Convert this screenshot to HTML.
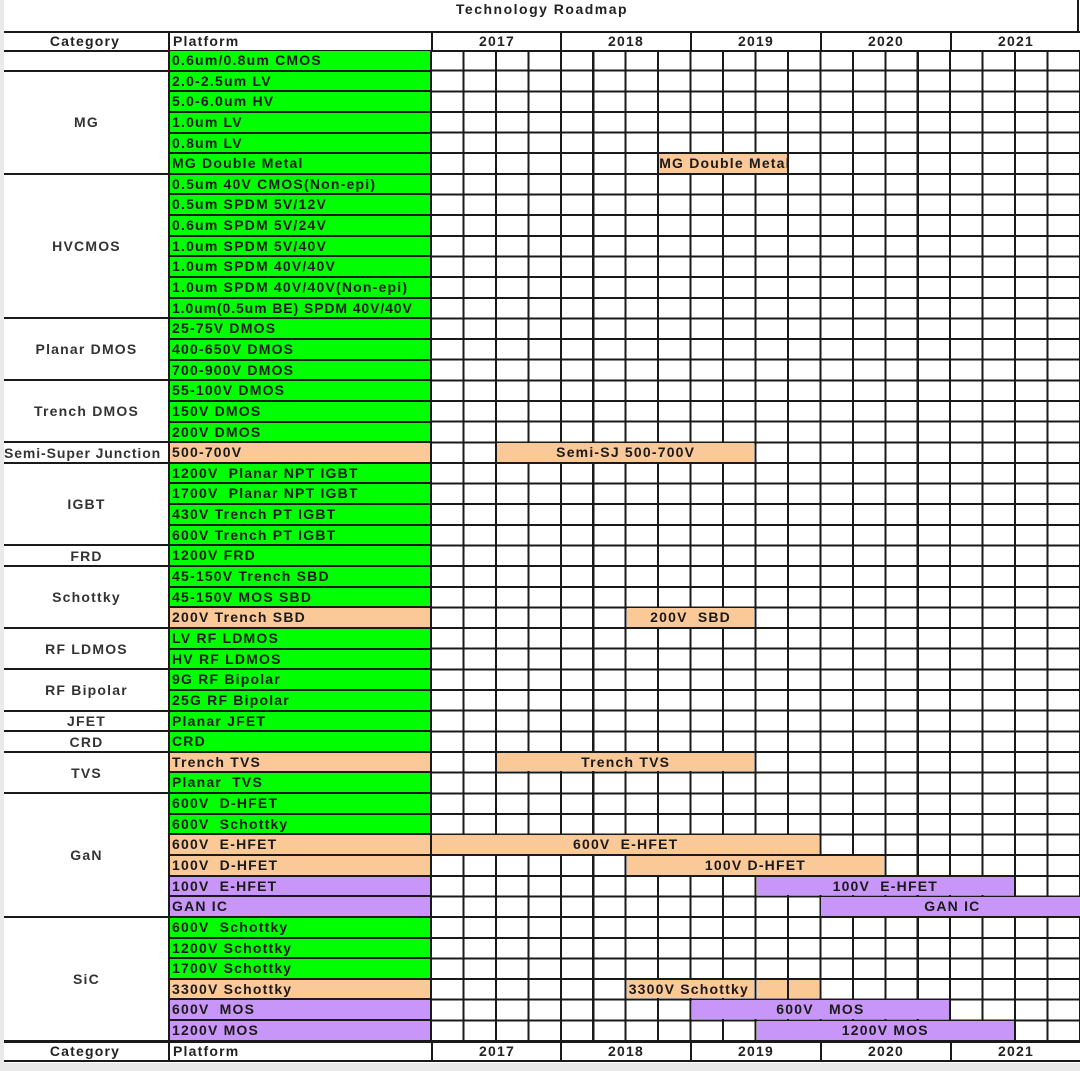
<!DOCTYPE html>
<html><head><meta charset="utf-8"><style>
*{margin:0;padding:0;box-sizing:border-box}
body{width:1080px;height:1071px;background:#e9e9e9;position:relative;overflow:hidden;font-family:"Liberation Sans",Arial,sans-serif;font-weight:bold;font-size:14px;color:#222;letter-spacing:1.2px}
#sheet{position:absolute;left:4px;top:0;width:1076px;height:1063px;background:#fff}
.title{position:absolute;left:0;width:1084px;top:1px;text-align:center;font-weight:bold;font-size:14px;color:#222;letter-spacing:1.5px}
.abs{position:absolute}
.hdr{position:absolute;top:31px;height:21px;border-top:2px solid #1a1a1a;border-bottom:2px solid #1a1a1a;line-height:17px}
.hc{position:absolute;top:0;height:17px;text-align:center;border-left:2px solid #1a1a1a}
#cat{position:absolute;left:4px;top:51px;width:165px}
#cat div{border-bottom:2px solid #1a1a1a;display:flex;align-items:center;justify-content:center;color:#333;white-space:nowrap;overflow:hidden}
#plat{position:absolute;left:168px;top:51px;width:264px;border-left:2px solid #1a1a1a;border-right:2px solid #1a1a1a}
#plat div{height:20.646px;background:#00ff00;border-bottom:2px solid #1a1a1a;padding-left:2px;line-height:19px;white-space:pre;overflow:hidden;color:#1a1a1a}
#plat .o{background:#fbc898}
#plat .u{background:#c896f8}
#tl{position:absolute;left:430px;top:51px;width:652px;height:991px;
background-image:repeating-linear-gradient(90deg,#1a1a1a 0 2px,transparent 2px 32.45px),repeating-linear-gradient(180deg,transparent 0 18.646px,#1a1a1a 18.646px 20.646px)}
.r{height:20.646px;position:relative}
.b{position:absolute;top:0;height:18.646px;line-height:18px;text-align:center;white-space:pre;color:#1a1a1a;overflow:hidden}
.o{background:#fbc898}.u{background:#c896f8}
</style></head><body>
<div id="sheet"></div>
<div class="title">Technology Roadmap</div>
<div class="abs" style="left:1077px;top:0;width:2px;height:31px;background:#1a1a1a"></div>

<div class="hdr" style="left:4px;width:1076px">
 <div class="hc" style="left:-2px;width:166px;border-left:none">Category</div>
 <div class="hc" style="left:164px;width:263px;text-align:left;padding-left:3px">Platform</div>
 <div class="hc" style="left:427px;width:130px">2017</div>
 <div class="hc" style="left:556px;width:130px">2018</div>
 <div class="hc" style="left:686px;width:130px">2019</div>
 <div class="hc" style="left:816px;width:130px">2020</div>
 <div class="hc" style="left:946px;width:130px">2021</div>
</div>
<div class="hdr" style="left:4px;width:1076px;top:1041px">
 <div class="hc" style="left:-2px;width:166px;border-left:none">Category</div>
 <div class="hc" style="left:164px;width:263px;text-align:left;padding-left:3px">Platform</div>
 <div class="hc" style="left:427px;width:130px">2017</div>
 <div class="hc" style="left:556px;width:130px">2018</div>
 <div class="hc" style="left:686px;width:130px">2019</div>
 <div class="hc" style="left:816px;width:130px">2020</div>
 <div class="hc" style="left:946px;width:130px">2021</div>
</div>

<div id="cat">
<div style="height:20.646px"></div>
<div style="height:103.23px">MG</div>
<div style="height:144.52px">HVCMOS</div>
<div style="height:61.94px">Planar DMOS</div>
<div style="height:61.94px">Trench DMOS</div>
<div style="height:20.646px;justify-content:flex-start;letter-spacing:0.9px">Semi-Super Junction</div>
<div style="height:82.58px">IGBT</div>
<div style="height:20.646px">FRD</div>
<div style="height:61.94px">Schottky</div>
<div style="height:41.29px">RF LDMOS</div>
<div style="height:41.29px">RF Bipolar</div>
<div style="height:20.646px">JFET</div>
<div style="height:20.646px">CRD</div>
<div style="height:41.29px">TVS</div>
<div style="height:123.88px">GaN</div>
<div style="height:123.88px">SiC</div>
</div>

<div id="plat">
<div>0.6um/0.8um CMOS</div>
<div>2.0-2.5um LV</div>
<div>5.0-6.0um HV</div>
<div>1.0um LV</div>
<div>0.8um LV</div>
<div>MG Double Metal</div>
<div>0.5um 40V CMOS(Non-epi)</div>
<div>0.5um SPDM 5V/12V</div>
<div>0.6um SPDM 5V/24V</div>
<div>1.0um SPDM 5V/40V</div>
<div>1.0um SPDM 40V/40V</div>
<div>1.0um SPDM 40V/40V(Non-epi)</div>
<div style="letter-spacing:0.9px">1.0um(0.5um BE) SPDM 40V/40V</div>
<div>25-75V DMOS</div>
<div>400-650V DMOS</div>
<div>700-900V DMOS</div>
<div>55-100V DMOS</div>
<div>150V DMOS</div>
<div>200V DMOS</div>
<div class="o">500-700V</div>
<div>1200V  Planar NPT IGBT</div>
<div>1700V  Planar NPT IGBT</div>
<div>430V Trench PT IGBT</div>
<div>600V Trench PT IGBT</div>
<div>1200V FRD</div>
<div>45-150V Trench SBD</div>
<div>45-150V MOS SBD</div>
<div class="o">200V Trench SBD</div>
<div>LV RF LDMOS</div>
<div>HV RF LDMOS</div>
<div>9G RF Bipolar</div>
<div>25G RF Bipolar</div>
<div>Planar JFET</div>
<div>CRD</div>
<div class="o">Trench TVS</div>
<div>Planar  TVS</div>
<div>600V  D-HFET</div>
<div>600V  Schottky</div>
<div class="o">600V  E-HFET</div>
<div class="o">100V  D-HFET</div>
<div class="u">100V  E-HFET</div>
<div class="u">GAN IC</div>
<div>600V  Schottky</div>
<div>1200V Schottky</div>
<div>1700V Schottky</div>
<div class="o">3300V Schottky</div>
<div class="u">600V  MOS</div>
<div class="u">1200V MOS</div>
</div>

<div id="tl">
<div class="r"></div><div class="r"></div><div class="r"></div><div class="r"></div><div class="r"></div>
<div class="r"><div class="b o" style="left:229.2px;width:128px;text-align:left">MG Double Metal</div></div>
<div class="r"></div><div class="r"></div><div class="r"></div><div class="r"></div><div class="r"></div><div class="r"></div><div class="r"></div>
<div class="r"></div><div class="r"></div><div class="r"></div>
<div class="r"></div><div class="r"></div><div class="r"></div>
<div class="r"><div class="b o" style="left:66.9px;width:257.6px">Semi-SJ 500-700V</div></div>
<div class="r"></div><div class="r"></div><div class="r"></div><div class="r"></div>
<div class="r"></div>
<div class="r"></div><div class="r"></div>
<div class="r"><div class="b o" style="left:196.7px;width:127.8px">200V  SBD</div></div>
<div class="r"></div><div class="r"></div>
<div class="r"></div><div class="r"></div>
<div class="r"></div><div class="r"></div>
<div class="r"><div class="b o" style="left:66.9px;width:257.6px">Trench TVS</div></div>
<div class="r"></div>
<div class="r"></div><div class="r"></div>
<div class="r"><div class="b o" style="left:2px;width:387.4px">600V  E-HFET</div></div>
<div class="r"><div class="b o" style="left:196.7px;width:257.6px">100V D-HFET</div></div>
<div class="r"><div class="b u" style="left:326.5px;width:257.6px">100V  E-HFET</div></div>
<div class="r"><div class="b u" style="left:391.4px;width:262px">GAN IC</div></div>
<div class="r"></div><div class="r"></div><div class="r"></div>
<div class="r"><div class="b o" style="left:196.7px;width:127.8px;text-align:left;padding-left:2px">3300V Schottky</div><div class="b o" style="left:326.5px;width:30.45px"></div><div class="b o" style="left:359px;width:30.45px"></div></div>
<div class="r"><div class="b u" style="left:261.6px;width:257.6px">600V   MOS</div></div>
<div class="r"><div class="b u" style="left:326.5px;width:257.6px">1200V MOS</div></div>
</div>
</body></html>
